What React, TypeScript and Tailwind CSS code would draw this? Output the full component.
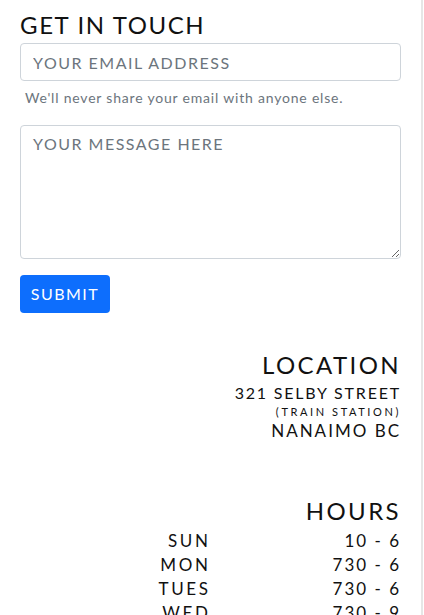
import React from 'react';

const hours = [
  { day: 'SUN', time: '10 - 6' },
  { day: 'MON', time: '730 - 6' },
  { day: 'TUES', time: '730 - 6' },
  { day: 'WED', time: '730 - 9' },
  { day: 'THURS', time: '730 - 9' },
];

const App: React.FC = () => {
  return (
    <div className="h-[615px] w-[424px] overflow-hidden bg-white font-['Lato',sans-serif] text-[#111]">
      <div className="h-full w-[423px] border-r-2 border-[#e6e6e6] pl-5 pr-5">
        <h2 className="pt-[10px] text-[24px] leading-[30px] font-normal tracking-[1.6px]">GET IN TOUCH</h2>
        <form className="mt-[3px] flex flex-col">
          <input
            type="email"
            placeholder="YOUR EMAIL ADDRESS"
            className="h-[38px] w-full rounded-[4px] border border-[#ced4da] px-3 text-[16px] tracking-[1.5px] placeholder:text-[#6c757d] focus:outline-none"
          />
          <small className="mt-[7px] pl-[5px] text-[14px] leading-[20px] tracking-[0.8px] text-[#6c757d]">
            We'll never share your email with anyone else.
          </small>
          <textarea
            placeholder="YOUR MESSAGE HERE"
            className="mt-[17px] h-[134px] w-full rounded-[4px] border border-[#ced4da] px-3 py-[6px] text-[16px] tracking-[1.5px] placeholder:text-[#6c757d] focus:outline-none"
          />
          <button
            type="submit"
            className="mt-[16px] h-[38px] w-[90px] rounded-[4px] bg-[#0d6efd] text-[16px] tracking-[1.5px] text-white"
          >
            SUBMIT
          </button>
        </form>

        <div className="mt-[37px] text-right text-[#111]">
          <h3 className="text-[24px] leading-[30px] tracking-[2.4px]">LOCATION</h3>
          <p className="mt-[2px] text-[16px] leading-[22px] tracking-[1.8px]">321 SELBY STREET</p>
          <p className="text-[11px] leading-[16px] tracking-[2.6px] text-[#111]">(TRAIN STATION)</p>
          <p className="text-[17px] leading-[22px] tracking-[2px]">NANAIMO BC</p>
        </div>

        <div className="mt-[54px]">
          <h3 className="text-right text-[24px] leading-[30px] tracking-[2.4px]">HOURS</h3>
          <div className="mt-[3px] grid grid-cols-2">
            {hours.map((h) => (
              <React.Fragment key={h.day}>
                <span className="text-right text-[17px] leading-[24px] tracking-[2.6px]">{h.day}</span>
                <span className="text-right text-[17px] leading-[24px] tracking-[2px]">{h.time}</span>
              </React.Fragment>
            ))}
          </div>
        </div>
      </div>
    </div>
  );
};

export default App;
